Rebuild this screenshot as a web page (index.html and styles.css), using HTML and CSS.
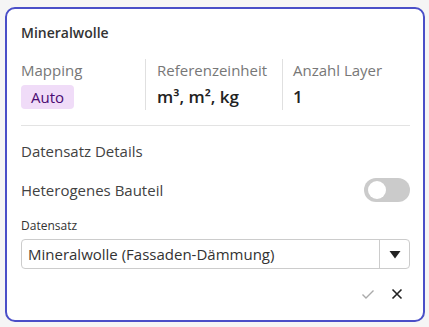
FILE: index.html
```html
<!DOCTYPE html>
<html lang="de">
<head>
<meta charset="utf-8">
<link rel="stylesheet" href="styles.css">
</head>
<body>
<div class="card">
  <div class="title">Mineralwolle</div>
  <div class="stats">
    <div class="stat stat-first">
      <div class="label">Mapping</div>
      <div class="badge">Auto</div>
    </div>
    <div class="stat stat-mid">
      <div class="label">Referenzeinheit</div>
      <div class="value">m³, m², kg</div>
    </div>
    <div class="stat stat-last">
      <div class="label">Anzahl Layer</div>
      <div class="value">1</div>
    </div>
  </div>
  <div class="rule"></div>
  <div class="section">Datensatz Details</div>
  <div class="row">
    <span class="row-label">Heterogenes Bauteil</span>
    <span class="toggle"><span class="knob"></span></span>
  </div>
  <div class="field-label">Datensatz</div>
  <div class="select">
    <span class="select-text">Mineralwolle (Fassaden-Dämmung)</span>
    <span class="select-btn"><svg width="12" height="9" viewBox="0 0 12 9"><path d="M0.5 1 L11.5 1 L6 8.5 Z" fill="#222"/></svg></span>
  </div>
  <div class="actions">
    <svg class="ico" width="14" height="14" viewBox="0 0 14 14"><path d="M1.5 7.5 L5 11 L12.5 3.5" fill="none" stroke="#aaa" stroke-width="1.4"/></svg>
    <svg class="ico" width="14" height="14" viewBox="0 0 14 14"><path d="M2.5 2.5 L11.5 11.5 M11.5 2.5 L2.5 11.5" fill="none" stroke="#222" stroke-width="1.6"/></svg>
  </div>
</div>
</body>
</html>
```
FILE: styles.css
```css
* { box-sizing: border-box; }
html, body { margin: 0; padding: 0; }
body {
  background: #f5f5f5;
  font-family: "Open Sans", "Noto Sans", sans-serif;
  color: #333;
  width: 429px;
  height: 327px;
  padding: 7px 4px 0 5px;
}
.card {
  width: 420px;
  height: 315px;
  background: #fff;
  border: 2px solid #4a4fc8;
  border-radius: 10px;
  padding: 14px 13px 0 14px;
}
.title {
  font-size: 14px;
  font-weight: 600;
  color: #333;
  line-height: 20px;
  height: 22px;
}
.stats {
  display: flex;
  margin-top: 14px;
}
.stat { height: 51px; }
.stat-first { width: 125px; border-right: 1px solid #e0e0e0; }
.stat-mid { width: 137px; padding-left: 11px; border-right: 1px solid #e0e0e0; }
.stat-last { padding-left: 10px; }
.label {
  font-size: 15px;
  color: #777;
  line-height: 22px;
}
.badge {
  display: inline-block;
  margin-top: 4px;
  background: #f0dcf8;
  color: #4a0a72;
  font-size: 15px;
  line-height: 24px;
  padding: 0 10px;
  border-radius: 4px;
}
.value {
  margin-top: 4px;
  font-size: 17px;
  font-weight: 600;
  color: #222;
  line-height: 24px;
}
.rule {
  height: 1px;
  background: #e3e3e3;
  margin-top: 15px;
}
.section {
  margin-top: 14px;
  font-size: 15px;
  color: #424242;
  line-height: 22px;
}
.row {
  margin-top: 16px;
  display: flex;
  align-items: center;
  justify-content: space-between;
  height: 24px;
}
.row-label { font-size: 15px; color: #424242; }
.toggle {
  width: 46px;
  height: 24px;
  border-radius: 12px;
  background: #cbcbcb;
  position: relative;
}
.knob {
  position: absolute;
  left: 4px;
  top: 3px;
  width: 18px;
  height: 18px;
  border-radius: 50%;
  background: #fff;
}
.field-label {
  margin-top: 16px;
  font-size: 12px;
  color: #333;
  line-height: 16px;
}
.select {
  margin-top: 5px;
  height: 30px;
  border: 1px solid #ccc;
  border-radius: 4px;
  display: flex;
}
.select-text {
  flex: 1;
  font-size: 15px;
  color: #333;
  line-height: 28px;
  padding-left: 6px;
  border-right: 1px solid #ccc;
}
.select-btn {
  width: 29px;
  display: flex;
  align-items: center;
  justify-content: center;
}
.actions {
  display: flex;
  justify-content: flex-end;
  gap: 15px;
  margin-top: 18px;
  padding-right: 6px;
}
```
